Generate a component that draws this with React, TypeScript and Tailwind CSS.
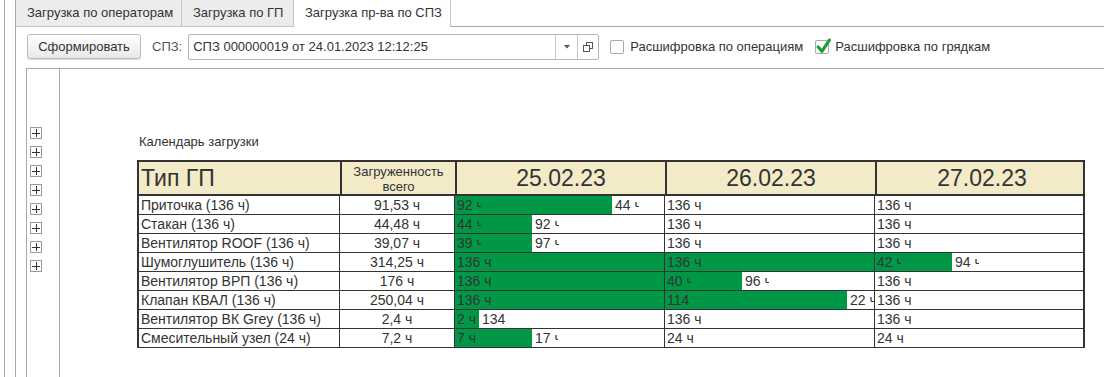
import React from "react";

type DayCell = {
  green?: number; // px width of filled part, -1 = full cell
  label: string;
  clip?: number;
  rest?: string;
  restClip?: number;
};

type Row = { name: string; total: string; days: DayCell[] };

const dates = ["25.02.23", "26.02.23", "27.02.23"];

const rows: Row[] = [
  {
    name: "Приточка (136 ч)",
    total: "91,53 ч",
    days: [
      { green: 157, label: "92 ч", clip: 24, rest: "44 ч", restClip: 24 },
      { label: "136 ч" },
      { label: "136 ч" },
    ],
  },
  {
    name: "Стакан (136 ч)",
    total: "44,48 ч",
    days: [
      { green: 77, label: "44 ч", clip: 24, rest: "92 ч", restClip: 24 },
      { label: "136 ч" },
      { label: "136 ч" },
    ],
  },
  {
    name: "Вентилятор ROOF (136 ч)",
    total: "39,07 ч",
    days: [
      { green: 77, label: "39 ч", clip: 24, rest: "97 ч", restClip: 24 },
      { label: "136 ч" },
      { label: "136 ч" },
    ],
  },
  {
    name: "Шумоглушитель (136 ч)",
    total: "314,25 ч",
    days: [
      { green: -1, label: "136 ч" },
      { green: -1, label: "136 ч" },
      { green: 77, label: "42 ч", clip: 24, rest: "94 ч", restClip: 24 },
    ],
  },
  {
    name: "Вентилятор ВРП (136 ч)",
    total: "176 ч",
    days: [
      { green: -1, label: "136 ч" },
      { green: 77, label: "40 ч", clip: 24, rest: "96 ч", restClip: 24 },
      { label: "136 ч" },
    ],
  },
  {
    name: "Клапан КВАЛ (136 ч)",
    total: "250,04 ч",
    days: [
      { green: -1, label: "136 ч" },
      { green: 182, label: "114 ч", clip: 25, rest: "22 ч", restClip: 24 },
      { label: "136 ч" },
    ],
  },
  {
    name: "Вентилятор ВК Grey (136 ч)",
    total: "2,4 ч",
    days: [
      { green: 24, label: "2 ч", rest: "134 ч", restClip: 25 },
      { label: "136 ч" },
      { label: "136 ч" },
    ],
  },
  {
    name: "Смесительный узел (24 ч)",
    total: "7,2 ч",
    days: [
      { green: 77, label: "7 ч", rest: "17 ч", restClip: 23 },
      { label: "24 ч" },
      { label: "24 ч" },
    ],
  },
];

function Clip({ text, width }: { text: string; width?: number }) {
  if (!width) return <span className="whitespace-nowrap">{text}</span>;
  return (
    <span className="block overflow-hidden whitespace-nowrap shrink-0" style={{ width }}>
      {text}
    </span>
  );
}

function Day({ c, last }: { c: DayCell; last: boolean }) {
  const edge = last ? "border-r-2" : "border-r";
  if (c.green === -1) {
    return (
      <div className={`h-[19px] bg-[#009846] ${edge} border-b border-[#333] pl-[2px] leading-[18px] overflow-hidden`}>
        {c.label}
      </div>
    );
  }
  return (
    <div className={`flex h-[19px] ${edge} border-b border-[#333] leading-[18px] overflow-hidden`}>
      {c.green ? (
        <div className="h-full bg-[#009846] pl-[2px] shrink-0" style={{ width: c.green }}>
          <Clip text={c.label} width={c.clip} />
        </div>
      ) : (
        <div className="pl-[2px] whitespace-nowrap">{c.label}</div>
      )}
      {c.rest && (
        <div className="pl-[3px]">
          <Clip text={c.rest} width={c.restClip} />
        </div>
      )}
    </div>
  );
}

function PlusBox() {
  return (
    <span className="relative block w-[12px] h-[12px] border border-[#9a9a9a] bg-white">
      <span className="absolute left-[1px] top-[5px] w-[8px] h-px bg-[#333]" />
      <span className="absolute left-[5px] top-[1px] w-px h-[8px] bg-[#333]" />
    </span>
  );
}

function Checkbox({ checked }: { checked?: boolean }) {
  return (
    <span className="relative block w-[14px] h-[14px] border border-[#a8a8a8] rounded-[2px] bg-white">
      {checked && (
        <svg className="absolute -left-[1px] -top-[3px]" width="17" height="17" viewBox="0 0 16 16">
          <path d="M3 8.5 L6.5 12.5 L13.5 2" fill="none" stroke="#1f9e36" strokeWidth="3" strokeLinecap="round" strokeLinejoin="round" />
        </svg>
      )}
    </span>
  );
}

export default function App() {
  return (
    <div className="flex w-[1104px] h-[377px] overflow-hidden bg-white text-[13px] text-[#333] font-['Liberation_Sans',Arial,sans-serif]">
      <div className="w-[4px] shrink-0" />
      <div className="w-[11px] shrink-0 border-l border-[#a9a9a9]" />
      <div className="flex flex-col flex-1 border-l border-[#a9a9a9]">
        {/* tabs */}
        <div className="flex h-[27px] shrink-0">
          <div className="w-[166px] bg-[#ececec] border-r border-b border-[#c4c4c4] pl-[11px] leading-[26px]">
            Загрузка по операторам
          </div>
          <div className="w-[112px] bg-[#ececec] border-r border-b border-[#c4c4c4] pl-[11px] leading-[26px]">
            Загрузка по ГП
          </div>
          <div className="w-[157px] bg-white border-r border-[#c4c4c4] pl-[11px] leading-[26px]">
            Загрузка пр-ва по СПЗ
          </div>
          <div className="flex-1 border-b border-[#a9a9a9]" />
        </div>

        {/* toolbar */}
        <div className="flex items-center h-[25px] mt-[7px] ml-[11px] shrink-0">
          <button className="w-[114px] h-[25px] rounded-[3px] border border-[#bdbdbd] bg-gradient-to-b from-white to-[#e9e9e9] shadow-[0_1px_1px_rgba(0,0,0,0.15)] text-[13px] text-[#333]">
            Сформировать
          </button>
          <span className="ml-[11px] text-[#555]">СПЗ:</span>
          <div className="flex items-center ml-[6px] w-[411px] h-[26px] border border-[#b5b5b5] rounded-[2px] bg-white">
            <span className="flex-1 pl-[4px] whitespace-nowrap">СПЗ 000000019 от 24.01.2023 12:12:25</span>
            <span className="flex items-center justify-center w-[22px] h-full border-l border-[#c8c8c8]">
              <svg width="6" height="4" viewBox="0 0 6 4">
                <path d="M0 0 H6 L3 3.5 Z" fill="#555" />
              </svg>
            </span>
            <span className="flex items-center justify-center w-[21px] h-full border-l border-[#c8c8c8]">
              <svg width="10" height="10" viewBox="0 0 10 10">
                <rect x="3.5" y="0.5" width="6" height="6" fill="none" stroke="#555" />
                <rect x="0.5" y="3.5" width="6" height="6" fill="white" stroke="#555" />
              </svg>
            </span>
          </div>
          <span className="ml-[11px]">
            <Checkbox />
          </span>
          <span className="ml-[6px]">Расшифровка по операциям</span>
          <span className="ml-[12px]">
            <Checkbox checked />
          </span>
          <span className="ml-[6px]">Расшифровка по грядкам</span>
        </div>

        {/* spreadsheet */}
        <div className="flex flex-1 mt-[9px] ml-[10px] border-t border-l border-[#a9a9a9]">
          <div className="w-[33px] shrink-0 border-r border-[#a9a9a9] pt-[58px] pl-[3px] flex flex-col gap-[7px]">
            {rows.map((r) => (
              <PlusBox key={r.name} />
            ))}
          </div>
          <div className="flex-1 pl-[77px] pt-[63px]">
            <div className="h-[19px] leading-[19px] pl-[2px] text-[13px]">Календарь загрузки</div>
            <div className="mt-[9px] w-[948px] text-[14px]">
              <div className="grid grid-cols-[203px_115px_210px_210px_210px] h-[36px] bg-[#f3eac8] border-2 border-[#333]">
                <div className="border-r-2 border-[#333] pl-[2px] text-[23px] leading-[32px]">Тип ГП</div>
                <div className="border-r-2 border-[#333] text-center text-[13px] leading-[15px] pt-[2px]">
                  Загруженность
                  <br />
                  всего
                </div>
                {dates.map((d, i) => (
                  <div key={d} className={`text-center text-[23px] leading-[32px] ${i < 2 ? "border-r-2 border-[#333]" : ""}`}>
                    {d}
                  </div>
                ))}
              </div>
              {rows.map((r) => (
                <div key={r.name} className="grid grid-cols-[203px_115px_210px_210px_210px]">
                  <div className="h-[19px] border-l-2 border-r border-b border-[#333] pl-[2px] leading-[18px] whitespace-nowrap">
                    {r.name}
                  </div>
                  <div className="h-[19px] border-r border-b border-[#333] text-center leading-[18px]">{r.total}</div>
                  {r.days.map((c, i) => (
                    <Day key={i} c={c} last={i === 2} />
                  ))}
                </div>
              ))}
            </div>
          </div>
        </div>
      </div>
    </div>
  );
}
